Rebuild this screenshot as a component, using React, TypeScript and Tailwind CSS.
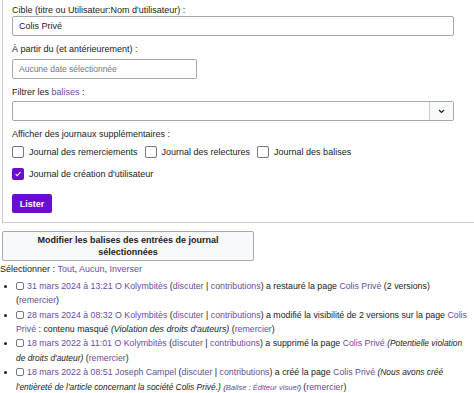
import React from "react";

const link = "text-[#6b4ba1]";

function Box({ checked }: { checked?: boolean }) {
  if (checked) {
    return (
      <span className="flex h-[12px] w-[12px] shrink-0 items-center justify-center rounded-[2px] bg-[#6a0dd0]">
        <svg width="8" height="8" viewBox="0 0 10 10" fill="none">
          <path d="M2 5.2l2 2L8 2.8" stroke="white" strokeWidth="1.4" />
        </svg>
      </span>
    );
  }
  return <span className="block h-[12px] w-[12px] shrink-0 rounded-[2px] border border-[#72777d] bg-white" />;
}

function SmallBox() {
  return (
    <span className="mr-[3px] inline-block h-[8px] w-[8px] translate-y-[1px] rounded-[2px] border border-[#72777d] bg-white align-baseline" />
  );
}

export default function App() {
  return (
    <div
      className="h-[393px] w-[474px] overflow-hidden bg-white text-[9px] leading-[14.4px] text-[#202122]"
      style={{ fontFamily: '"Liberation Sans", Arial, sans-serif' }}
    >
      <div className="ml-[2px] w-[480px] border-b border-l border-[#c8ccd1] px-[9px] pb-[9px] pt-[3px]">
        <div>Cible (titre ou Utilisateur:Nom d'utilisateur) :</div>
        <div className="mt-[-1px] flex h-[20px] w-[442px] items-center rounded-[2px] border border-[#a2a9b1] px-[6px]">
          Colis Privé
        </div>

        <div className="mt-[6px]">À partir du (et antérieurement) :</div>
        <div className="mt-[2px] flex h-[20px] w-[185px] items-center rounded-[2px] border border-[#a2a9b1] px-[6px] text-[8.5px] text-[#72777d]">
          Aucune date sélectionnée
        </div>

        <div className="mt-[6px]">
          Filtrer les <span className={link}>balises</span> :
        </div>
        <div className="mt-[2px] flex h-[20px] w-[442px] rounded-[2px] border border-[#a2a9b1]">
          <div className="flex-1" />
          <div className="flex w-[24px] items-center justify-center border-l border-[#c8ccd1] bg-[#f8f9fa]">
            <svg width="7" height="5" viewBox="0 0 7 5" fill="none">
              <path d="M1 1l2.5 2.5L6 1" stroke="#202122" strokeWidth="1.2" />
            </svg>
          </div>
        </div>

        <div className="mt-[6px]">Afficher des journaux supplémentaires :</div>
        <div className="mt-[3px] flex items-center">
          <Box />
          <span className="ml-[5px]">Journal des remerciements</span>
          <span className="ml-[7px]">
            <Box />
          </span>
          <span className="ml-[5px]">Journal des relectures</span>
          <span className="ml-[7px]">
            <Box />
          </span>
          <span className="ml-[5px]">Journal des balises</span>
        </div>
        <div className="mt-[8px] flex items-center">
          <Box checked />
          <span className="ml-[5px]">Journal de création d'utilisateur</span>
        </div>

        <button className="mt-[13px] flex h-[19px] w-[40px] items-center justify-center rounded-[2px] bg-[#6a0dd0] font-bold text-white">
          Lister
        </button>
      </div>

      <button className="ml-[2px] mt-[8px] flex h-[30px] w-[252px] flex-col items-center justify-center rounded-[2px] border border-[#a2a9b1] bg-[#f8f9fa] text-[9px] font-bold leading-[12px]">
        <span>Modifier les balises des entrées de journal</span>
        <span>sélectionnées</span>
      </button>

      <div className="mt-[1px]">
        Sélectionner : <span className={link}>Tout</span>, <span className={link}>Aucun</span>,{" "}
        <span className={link}>Inverser</span>
      </div>

      <ul className="ml-[16px] mt-[2px] w-[456px] list-disc whitespace-nowrap text-[8.8px]">
        <li>
          <SmallBox />
          <span className={link}>31 mars 2024 à 13:21</span> <span className={link}>O Kolymbitès</span> (
          <span className={link}>discuter</span> | <span className={link}>contributions</span>) a restauré la page{" "}
          <span className={link}>Colis Privé</span> (2 versions)
          <br />(<span className={link}>remercier</span>)
        </li>
        <li>
          <SmallBox />
          <span className={link}>28 mars 2024 à 08:32</span> <span className={link}>O Kolymbitès</span> (
          <span className={link}>discuter</span> | <span className={link}>contributions</span>) a modifié la visibilité de 2
          versions sur la page <span className={link}>Colis</span>
          <br />
          <span className={link}>Privé</span> : contenu masqué <i>(Violation des droits d'auteurs)</i> (
          <span className={link}>remercier</span>)
        </li>
        <li>
          <SmallBox />
          <span className={link}>18 mars 2022 à 11:01</span> <span className={link}>O Kolymbitès</span> (
          <span className={link}>discuter</span> | <span className={link}>contributions</span>) a supprimé la page{" "}
          <span className={link}>Colis Privé</span> <i className="text-[8.4px]">(Potentielle violation</i>
          <br />
          <i className="text-[8.4px]">de droits d'auteur)</i> (<span className={link}>remercier</span>)
        </li>
        <li>
          <SmallBox />
          <span className={link}>18 mars 2022 à 08:51</span> <span className={link}>Joseph Campel</span> (
          <span className={link}>discuter</span> | <span className={link}>contributions</span>) a créé la page{" "}
          <span className={link}>Colis Privé</span> <i className="text-[8.4px]">(Nous avons créé</i>
          <br />
          <i className="text-[8.4px]">l'entièreté de l'article concernant la société Colis Privé.)</i>{" "}
          <i className="text-[7.6px]">
            (<span className={link}>Balise</span> : <span className={link}>Éditeur visuel</span>)
          </i>{" "}
          (<span className={link}>remercier</span>)
        </li>
      </ul>
    </div>
  );
}
